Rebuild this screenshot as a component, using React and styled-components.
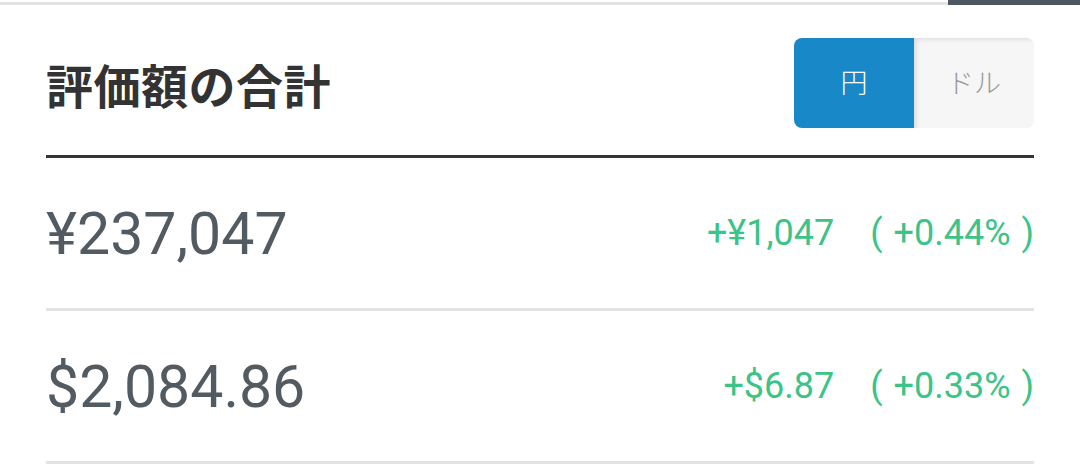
import React, { useState } from 'react';
import styled, { createGlobalStyle } from 'styled-components';

const GlobalStyle = createGlobalStyle`
  body {
    margin: 0;
    background: #ffffff;
    font-family: Roboto, "Noto Sans CJK JP", sans-serif;
  }
`;

const rows = [
  { id: 'jpy', total: '¥237,047', diff: '+¥1,047', rate: '+0.44%' },
  { id: 'usd', total: '$2,084.86', diff: '+$6.87', rate: '+0.33%' },
];

function App() {
  const [currency, setCurrency] = useState('jpy');

  return (
    <Page>
      <GlobalStyle />
      <TopBar>
        <div className="line" />
        <div className="tab" />
      </TopBar>
      <Content>
        <Header>
          <Title>評価額の合計</Title>
          <Toggle>
            <ToggleButton $active={currency === 'jpy'} onClick={() => setCurrency('jpy')}>
              円
            </ToggleButton>
            <ToggleButton $active={currency === 'usd'} onClick={() => setCurrency('usd')}>
              ドル
            </ToggleButton>
          </Toggle>
        </Header>
        {rows.map((row) => (
          <Row key={row.id}>
            <Total>{row.total}</Total>
            <Change>
              <span>{row.diff}</span>
              <span className="rate">( {row.rate} )</span>
            </Change>
          </Row>
        ))}
      </Content>
    </Page>
  );
}

export default App;

const Page = styled.div`
  width: 1080px;
  height: 465px;
  overflow: hidden;
`;

const TopBar = styled.div`
  display: flex;
  height: 5px;

  .line {
    flex: 1;
    margin-top: 2px;
    background-color: #e2e2e2;
  }

  .tab {
    width: 132px;
    background-color: #4f5862;
  }
`;

const Content = styled.div`
  padding: 0 46px;
`;

const Header = styled.div`
  display: flex;
  align-items: center;
  justify-content: space-between;
  padding: 33px 0 27px;
  border-bottom: 3px solid #333333;
`;

const Title = styled.h1`
  margin: 0;
  font-family: "Noto Sans CJK JP", sans-serif;
  font-size: 47px;
  font-weight: 700;
  line-height: 1;
  color: #333333;
  letter-spacing: 0.5px;
`;

const Toggle = styled.div`
  display: flex;
  height: 90px;
  border-radius: 8px;
  overflow: hidden;
  background-color: #f6f6f6;
`;

const ToggleButton = styled.div`
  width: 120px;
  display: flex;
  align-items: center;
  justify-content: center;
  padding-bottom: 4px;
  box-sizing: border-box;
  font-family: "Noto Sans CJK JP", sans-serif;
  font-size: 27px;
  font-weight: 300;
  cursor: pointer;
  color: ${(p) => (p.$active ? '#ffffff' : '#9a9a9a')};
  background-color: ${(p) => (p.$active ? '#1888c8' : '#f6f6f6')};
  box-shadow: ${(p) => (p.$active ? 'none' : 'inset 4px 3px 5px -2px rgba(0, 0, 0, 0.12)')};
`;

const Row = styled.div`
  height: 150px;
  display: flex;
  align-items: center;
  justify-content: space-between;
  border-bottom: 3px solid #e2e2e2;
`;

const Total = styled.div`
  font-size: 59px;
  color: #535b62;
`;

const Change = styled.div`
  display: flex;
  align-items: center;
  font-size: 36px;
  color: #3cc387;

  .rate {
    margin-left: 36px;
    word-spacing: 2px;
  }
`;
